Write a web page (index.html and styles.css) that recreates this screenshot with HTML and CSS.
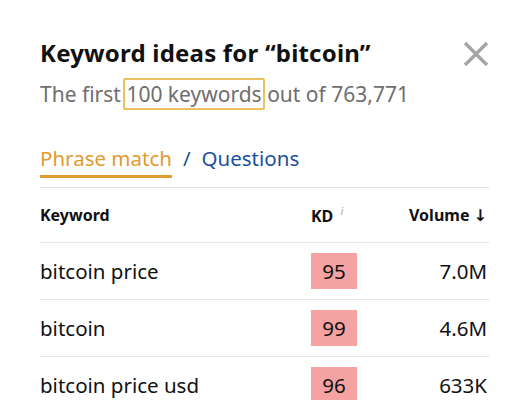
FILE: index.html
```html
<!DOCTYPE html>
<html>
<head>
<meta charset="utf-8">
<link rel="stylesheet" href="styles.css">
</head>
<body>
<div class="panel">
  <div class="head">
    <h1 class="title">Keyword ideas for “bitcoin”</h1>
    <svg class="close" width="26" height="26" viewBox="0 0 26 26"><path d="M2 2 L24 24 M24 2 L2 24" stroke="#a3a3a3" stroke-width="3.2" fill="none"/></svg>
  </div>
  <p class="sub">The first <span class="hl">100 keywords</span> out of 763,771</p>
  <div class="tabs">
    <span class="tab active">Phrase match</span>
    <span class="sep">/</span>
    <span class="tab link">Questions</span>
  </div>
  <div class="table">
    <div class="row header">
      <span class="kw">Keyword</span>
      <span class="kd">KD <sup class="info">i</sup></span>
      <span class="vol">Volume ↓</span>
    </div>
    <div class="row">
      <span class="kw">bitcoin price</span>
      <span class="kd"><span class="badge">95</span></span>
      <span class="vol">7.0M</span>
    </div>
    <div class="row">
      <span class="kw">bitcoin</span>
      <span class="kd"><span class="badge">99</span></span>
      <span class="vol">4.6M</span>
    </div>
    <div class="row">
      <span class="kw">bitcoin price usd</span>
      <span class="kd"><span class="badge">96</span></span>
      <span class="vol">633K</span>
    </div>
  </div>
</div>
</body>
</html>
```

FILE: styles.css
```css
* { box-sizing: border-box; }
html, body { margin: 0; padding: 0; background: #fff; }
body { font-family: "Noto Sans", "DejaVu Sans", sans-serif; color: #111; overflow: hidden; }
.panel { width: 532px; padding: 38px 42px 0 40px; }
.head { display: flex; justify-content: space-between; align-items: flex-start; }
.title { margin: 0; font-size: 24px; font-weight: 700; line-height: 30px; letter-spacing: 0.2px; color: #111; }
.close { margin-top: 3px; margin-right: 1px; }
.sub { margin: 12px 0 0; font-size: 21px; line-height: 28px; color: #6e6e6e; }
.hl { border: 2px solid #ebc15f; border-radius: 2px; padding: 0 1px; margin: 0 -3px 0 -3px; }
.tabs { margin-top: 37px; display: flex; align-items: flex-end; gap: 11px; font-size: 20.5px; line-height: 26px; border-bottom: 1px solid #e6e6e6; padding-bottom: 9px; }
.tab.active { color: #e39a2f; border-bottom: 3px solid #e39a2f; padding-bottom: 4px; }
.sep { color: #1d4f9e; padding-bottom: 7px; }
.link { color: #1d4f9e; padding-bottom: 7px; }
.table { display: flex; flex-direction: column; }
.row { display: grid; grid-template-columns: 271px 74px 1fr; align-items: center; height: 57px; border-bottom: 1px solid #e8e8e8; font-size: 20.5px; }
.row.header { height: 55px; font-size: 16px; font-weight: 700; }
.vol { text-align: right; padding-right: 3px; }
.info { color: #aaa; font-weight: 400; font-size: 11px; font-style: italic; vertical-align: 7px; margin-left: 3px; }
.badge { display: inline-block; width: 46px; height: 36px; line-height: 36px; text-align: center; background: #f5a2a2; }
```
